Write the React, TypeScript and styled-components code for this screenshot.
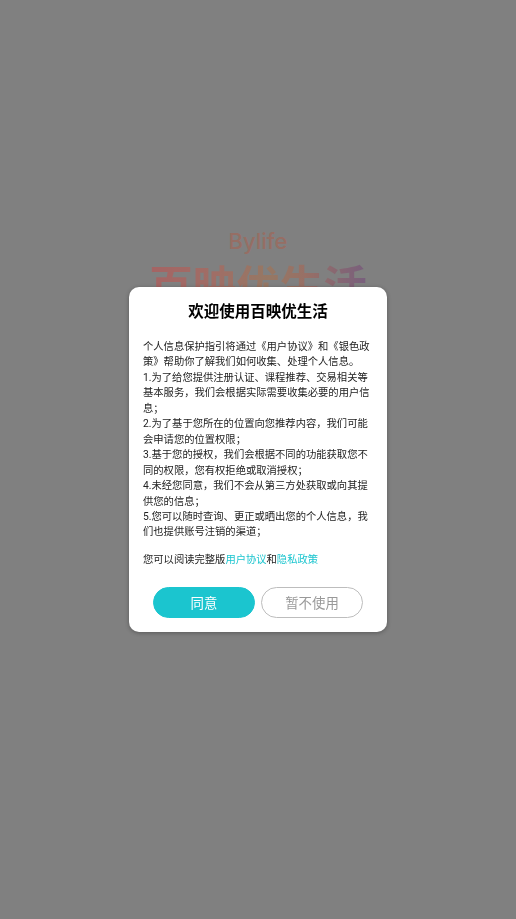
import React from "react";
import styled, { createGlobalStyle } from "styled-components";

const GlobalStyle = createGlobalStyle`
  html, body {
    margin: 0;
    padding: 0;
    height: 100%;
    background: #808080;
    font-family: Roboto, "Noto Sans CJK SC", sans-serif;
  }
`;

const Page = styled.div`
  width: 100%;
  height: 100vh;
  display: flex;
  flex-direction: column;
  align-items: center;
  padding-top: 229px;
  box-sizing: border-box;
  background: #808080;
`;

const Brand = styled.div`
  font-family: Inter, sans-serif;
  font-size: 22px;
  line-height: 24px;
  font-weight: 500;
  color: #ac5c48;
`;

const BrandName = styled.div`
  margin-top: 9px;
  font-size: 43.5px;
  line-height: 52px;
  font-weight: 700;
  background: linear-gradient(90deg, #ca4848 0%, #c05c4c 30%, #ac7048 55%, #b0604c 72%, #703e7a 100%);
  -webkit-background-clip: text;
  background-clip: text;
  color: transparent;
`;

const Overlay = styled.div`
  position: fixed;
  inset: 0;
  display: flex;
  justify-content: center;
  align-items: flex-start;
  padding-top: 287px;
  background: rgba(128, 128, 128, 0.5);
`;

const Dialog = styled.div`
  width: 258px;
  height: 345px;
  box-sizing: border-box;
  padding: 15px 14px 14px;
  background: #fff;
  border-radius: 10px;
  box-shadow: 0 1px 4px rgba(0, 0, 0, 0.3);
  display: flex;
  flex-direction: column;
`;

const Title = styled.h2`
  margin: 0 0 17px;
  font-size: 15.5px;
  line-height: 20px;
  font-weight: 600;
  text-align: center;
  color: #000;
`;

const Body = styled.div`
  font-size: 10.3px;
  line-height: 15.45px;
  color: #222;
`;

const Paragraph = styled.p`
  margin: 0;
`;

const ReadMore = styled.p`
  margin: 12px 0 0;
  font-size: 10.3px;
  line-height: 16px;
  color: #222;
`;

const TextLink = styled.a`
  color: #1bc5cf;
`;

const Actions = styled.div`
  display: flex;
  justify-content: center;
  gap: 6px;
  margin-top: 19px;
`;

const Button = styled.button<{ $primary?: boolean }>`
  width: 102px;
  height: 31px;
  padding: 0;
  border-radius: 16px;
  font-family: inherit;
  font-size: 13.4px;
  border: 1px solid ${(p) => (p.$primary ? "#1bc5cf" : "#bdbdbd")};
  background: ${(p) => (p.$primary ? "#1bc5cf" : "#fff")};
  color: ${(p) => (p.$primary ? "#fff" : "#999")};
`;

const lines = [
  "个人信息保护指引将通过《用户协议》和《银色政策》帮助你了解我们如何收集、处理个人信息。",
  "1.为了给您提供注册认证、课程推荐、交易相关等基本服务，我们会根据实际需要收集必要的用户信息；",
  "2.为了基于您所在的位置向您推荐内容，我们可能会申请您的位置权限；",
  "3.基于您的授权，我们会根据不同的功能获取您不同的权限，您有权拒绝或取消授权；",
  "4.未经您同意，我们不会从第三方处获取或向其提供您的信息；",
  "5.您可以随时查询、更正或晒出您的个人信息，我们也提供账号注销的渠道；",
];

export default function App() {
  return (
    <>
      <GlobalStyle />
      <Page>
        <Brand>Bylife</Brand>
        <BrandName>百映优生活</BrandName>
      </Page>
      <Overlay>
        <Dialog>
          <Title>欢迎使用百映优生活</Title>
          <Body>
            {lines.map((line) => (
              <Paragraph key={line}>{line}</Paragraph>
            ))}
          </Body>
          <ReadMore>
            您可以阅读完整版<TextLink>用户协议</TextLink>和<TextLink>隐私政策</TextLink>
          </ReadMore>
          <Actions>
            <Button $primary>同意</Button>
            <Button>暂不使用</Button>
          </Actions>
        </Dialog>
      </Overlay>
    </>
  );
}
